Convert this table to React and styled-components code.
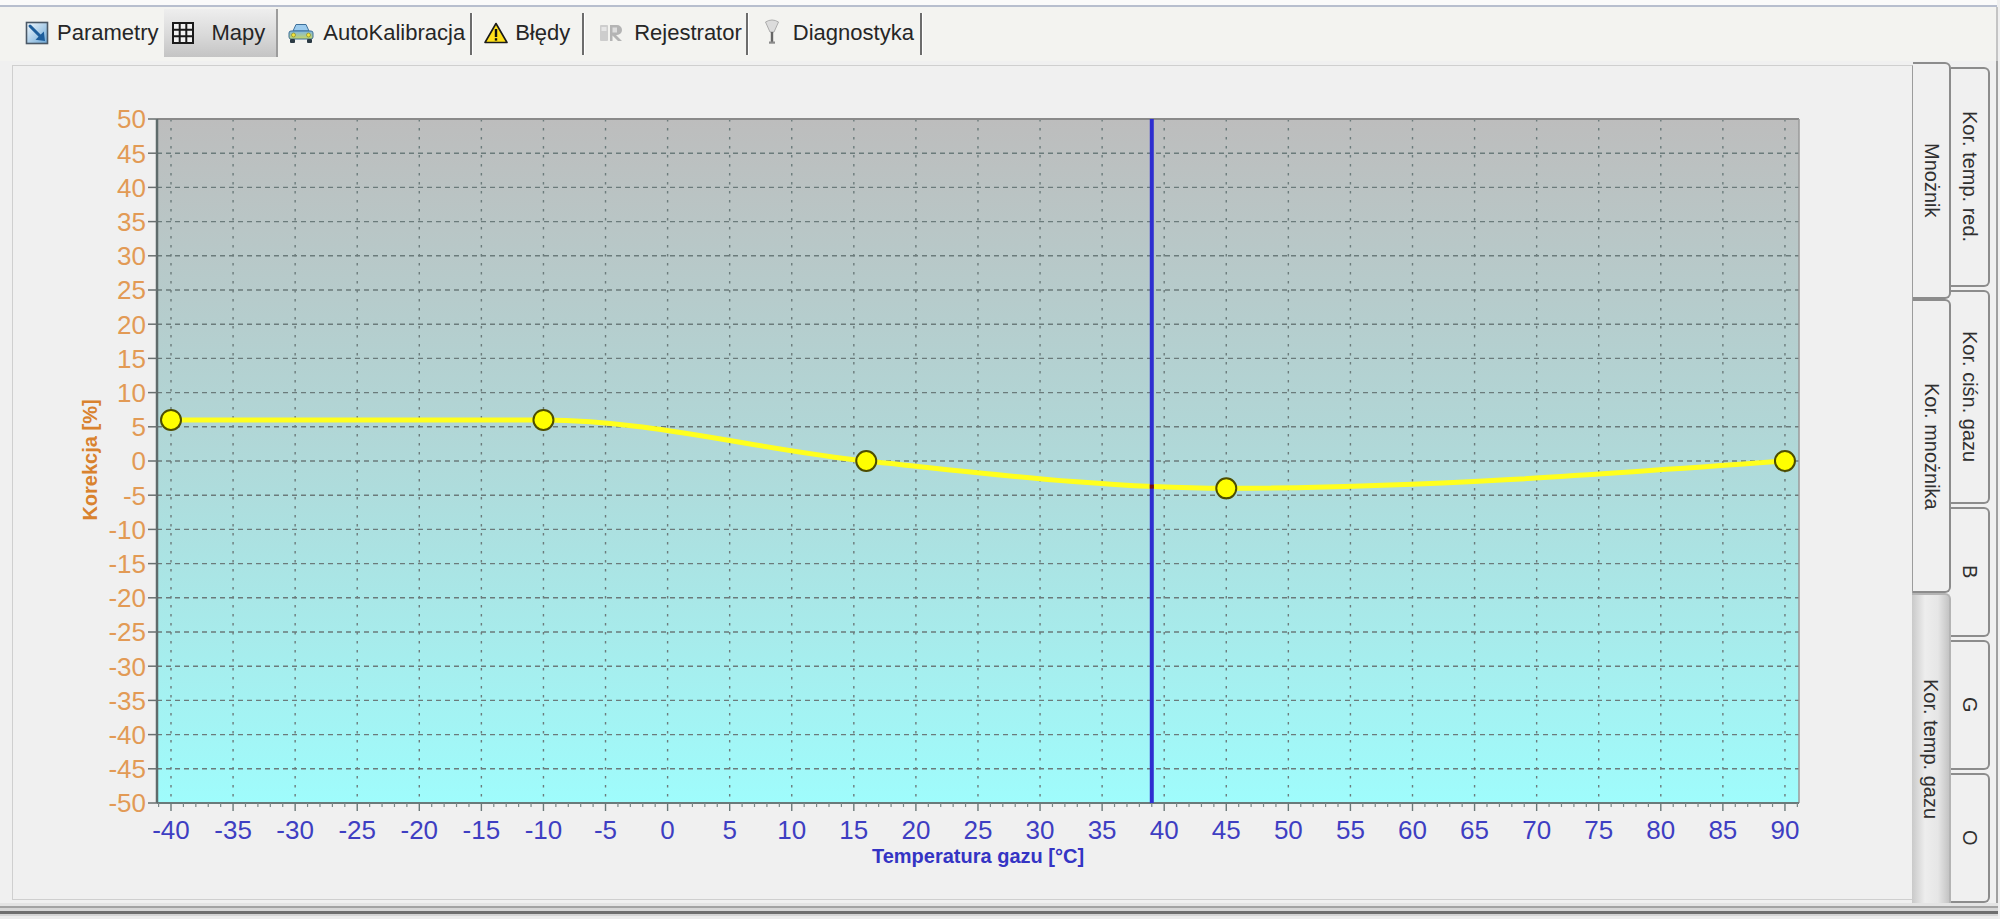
import React from "react";
import styled, { createGlobalStyle, css } from "styled-components";

const Global = createGlobalStyle`
  html, body { margin: 0; padding: 0; background: #f0f0f0; }
  body { font-family: "Liberation Sans", Arial, sans-serif; overflow: hidden; }
`;

const Window = styled.div`
  width: 2000px;
  height: 919px;
  display: flex;
  flex-direction: column;
  background: #f0f0f0;
  overflow: hidden;
`;

const TopStrip = styled.div`
  height: 5px;
  background: #fafafa;
  border-bottom: 2px solid #b7bece;
  margin-right: 3px;
  flex: none;
`;

const TabBar = styled.div`
  height: 54px;
  flex: none;
  display: flex;
  align-items: flex-start;
  padding-left: 17px;
  background: #f3f3f0;
  margin-right: 2px;
  border-right: 2px solid #c4c4c4;
  box-sizing: border-box;
`;

const Tab = styled.div`
  display: flex;
  align-items: center;
  height: 48px;
  margin-top: 2px;
  box-sizing: border-box;
  padding: 0 ${(p) => p.$pr}px 0 ${(p) => p.$pl}px;
  gap: ${(p) => p.$gap}px;
  font-size: 22px;
  color: #262626;
  white-space: nowrap;
  ${(p) =>
    p.$active &&
    css`
      background: linear-gradient(#eeeeee, #d9d9d9 55%, #c4c4c4);
      border-right: 2px solid #9c9c9c;
    `}
`;

const TabIcon = styled.span`
  display: flex;
  align-items: center;
  justify-content: center;
  width: ${(p) => p.$w}px;
  height: 30px;
  flex: none;
`;

const TabSep = styled.div`
  width: 2px;
  height: 42px;
  margin-top: 6px;
  background: #6c6c6c;
  box-shadow: 1px 0 0 #ffffff;
  flex: none;
`;

const BodyRow = styled.div`
  height: 842px;
  flex: none;
  display: flex;
  margin-right: 2px;
  padding-right: 6px;
  border-right: 2px solid #a0a0a0;
`;

const Panel = styled.div`
  flex: 1;
  margin: 4px 0 3px 12px;
  border: 1px solid #cfcfcf;
  border-right-color: #9c9c9c;
  background: #f0f0f0;
  overflow: hidden;
`;

const ChartSvg = styled.svg`
  display: block;
`;

const SideCol = styled.div`
  width: ${(p) => p.$w}px;
  flex: none;
  display: flex;
  flex-direction: column;
  padding-top: ${(p) => p.$pt}px;
  box-sizing: border-box;
`;

const SideTab = styled.div`
  box-sizing: border-box;
  height: ${(p) => (p.$h ? `${p.$h}px` : "auto")};
  flex: ${(p) => (p.$grow ? 1 : "none")};
  margin-bottom: ${(p) => p.$mb || 0}px;
  border: 2px solid #8c8c8c;
  border-left: none;
  border-radius: 0 6px 6px 0;
  background: #f0f0f0;
  display: flex;
  align-items: center;
  justify-content: center;
  ${(p) =>
    p.$active &&
    css`
      margin-left: -1px;
      border-color: #b4b4b4;
      border-bottom: none;
      border-radius: 0 6px 0 0;
      background: linear-gradient(90deg, #c9c9c9, #ededed 35%, #e6e6e6 70%, #c4c4c4);
    `}
`;

const SideLabel = styled.span`
  writing-mode: vertical-rl;
  font-size: 20px;
  color: #303030;
  white-space: nowrap;
`;

const BottomFrame = styled.div`
  height: 16px;
  flex: none;
  margin-right: 2px;
  background: linear-gradient(
    to bottom,
    #e4e4e4 0 3px,
    #a3a3a3 3px 5px,
    #d6d6d6 5px 8px,
    #6e6e6e 8px 11px,
    #d4d4d4 11px 13px,
    #ececec 13px
  );
`;

/* ---------- icons ---------- */
const IconParams = () => (
  <svg width="24" height="24" viewBox="0 0 24 24">
    <defs>
      <linearGradient id="pg" x1="0" y1="0" x2="1" y2="1">
        <stop offset="0" stopColor="#f4fafe" />
        <stop offset="1" stopColor="#6aa6d6" />
      </linearGradient>
    </defs>
    <rect x="1.5" y="1.5" width="21" height="21" fill="url(#pg)" stroke="#4a5866" strokeWidth="1.6" />
    <path d="M5 5 L15.5 15.5" stroke="#1d5d9b" strokeWidth="3" strokeLinecap="round" />
    <path d="M20 20 L10.5 18.8 L18.8 10.5 Z" fill="#1d5d9b" />
  </svg>
);

const IconMaps = () => (
  <svg width="24" height="24" viewBox="0 0 24 24">
    <rect x="2" y="2" width="20" height="20" fill="#f2f2f2" stroke="#1a1a1a" strokeWidth="2" />
    <path d="M8.7 2v20M15.3 2v20M2 8.7h20M2 15.3h20" stroke="#1a1a1a" strokeWidth="2" />
  </svg>
);

const IconCar = () => (
  <svg width="28" height="24" viewBox="0 0 28 24">
    <defs>
      <linearGradient id="cg" x1="0" y1="0" x2="0" y2="1">
        <stop offset="0" stopColor="#7eb6e4" />
        <stop offset="1" stopColor="#c8d660" />
      </linearGradient>
    </defs>
    <path d="M6 10 L9 3.5 H19 L22 10 Z" fill="#9ccbee" stroke="#3d6f99" strokeWidth="1" />
    <rect x="2" y="10" width="24" height="8" rx="2" fill="url(#cg)" stroke="#3d6f99" strokeWidth="1" />
    <circle cx="6.5" cy="14" r="2" fill="#f4e63a" stroke="#7a7a20" strokeWidth="0.6" />
    <circle cx="21.5" cy="14" r="2" fill="#f4e63a" stroke="#7a7a20" strokeWidth="0.6" />
    <rect x="3" y="18" width="5" height="4" rx="1" fill="#2b3a44" />
    <rect x="20" y="18" width="5" height="4" rx="1" fill="#2b3a44" />
  </svg>
);

const IconWarn = () => (
  <svg width="24" height="22" viewBox="0 0 24 22">
    <path d="M12 1.5 L23 20.5 H1 Z" fill="#ffe01a" stroke="#1a1a1a" strokeWidth="1.6" strokeLinejoin="round" />
    <rect x="10.8" y="7" width="2.4" height="8" fill="#111" />
    <rect x="10.8" y="16.2" width="2.4" height="2.4" fill="#111" />
  </svg>
);

const IconRec = () => (
  <svg width="28" height="24" viewBox="0 0 28 24">
    <rect x="3" y="4" width="8" height="16" rx="1" fill="#cdcdcd" />
    <rect x="4.5" y="6" width="5" height="4" fill="#e6e6e6" />
    <path d="M13 4 H20 A5 5 0 0 1 20 14 H19 L25 20 H21 L15.5 14.5 V20 H13 Z" fill="#b4b4b4" />
    <rect x="15.5" y="6.5" width="4.5" height="5" fill="#dedede" />
  </svg>
);

const IconDiag = () => (
  <svg width="18" height="28" viewBox="0 0 18 28">
    <path d="M2.5 3 Q9 -1 15.5 3 L11 13 H7 Z" fill="#dcdcdc" stroke="#acacac" strokeWidth="1" />
    <rect x="7.8" y="13" width="2.4" height="10" fill="#666" />
    <rect x="6" y="22.5" width="6" height="2.2" fill="#8a8a8a" />
  </svg>
);

/* ---------- chart ---------- */
const X0 = 171;
const XS = 12.415;
const Y0 = 119;
const YS = 6.84;
const xs = (v) => X0 + (v + 40) * XS;
const ys = (v) => Y0 + (50 - v) * YS;
const PL = 157;
const PR = 1799;
const PT = 119;
const PB = 803;

const DATA = [
  [-40, 6],
  [-10, 6],
  [16, 0],
  [45, -4],
  [90, 0],
];

function monotoneTangents(pts) {
  const n = pts.length;
  const sign = (v) => (v < 0 ? -1 : v > 0 ? 1 : 0);
  const t = new Array(n).fill(0);
  for (let i = 1; i < n - 1; i++) {
    const [x0, y0] = pts[i - 1];
    const [x1, y1] = pts[i];
    const [x2, y2] = pts[i + 1];
    const h0 = x1 - x0;
    const h1 = x2 - x1;
    const s0 = (y1 - y0) / h0;
    const s1 = (y2 - y1) / h1;
    const p = (s0 * h1 + s1 * h0) / (h0 + h1);
    t[i] = (sign(s0) + sign(s1)) * Math.min(Math.abs(s0), Math.abs(s1), 0.5 * Math.abs(p)) || 0;
  }
  const h = pts[1][0] - pts[0][0];
  t[0] = (3 * (pts[1][1] - pts[0][1]) / h - t[1]) / 2;
  const h2 = pts[n - 1][0] - pts[n - 2][0];
  t[n - 1] = (3 * (pts[n - 1][1] - pts[n - 2][1]) / h2 - t[n - 2]) / 2;
  return t;
}

function monotonePath(pts, t) {
  let d = `M${pts[0][0]},${pts[0][1]}`;
  for (let i = 0; i < pts.length - 1; i++) {
    const [x0, y0] = pts[i];
    const [x1, y1] = pts[i + 1];
    const dx = (x1 - x0) / 3;
    d += ` C${x0 + dx},${y0 + dx * t[i]} ${x1 - dx},${y1 - dx * t[i + 1]} ${x1},${y1}`;
  }
  return d;
}

function evalAt(pts, t, x) {
  for (let i = 0; i < pts.length - 1; i++) {
    const [x0, y0] = pts[i];
    const [x1, y1] = pts[i + 1];
    if (x >= x0 && x <= x1) {
      const h = x1 - x0;
      const u = (x - x0) / h;
      const h00 = 2 * u ** 3 - 3 * u ** 2 + 1;
      const h10 = u ** 3 - 2 * u ** 2 + u;
      const h01 = 1 - h00;
      const h11 = u ** 3 - u ** 2;
      return h00 * y0 + h10 * h * t[i] + h01 * y1 + h11 * h * t[i + 1];
    }
  }
  return pts[0][1];
}

function Chart() {
  const xMaj = [];
  for (let v = -40; v <= 90; v += 5) xMaj.push(v);
  const yMaj = [];
  for (let v = 50; v >= -50; v -= 5) yMaj.push(v);
  const minor = [];
  for (let v = -41; v <= 91; v++) if (v % 5 !== 0) minor.push(v);
  const pts = DATA.map(([x, y]) => [xs(x), ys(y)]);
  const tan = monotoneTangents(pts);
  const curve = monotonePath(pts, tan);
  const cx = xs(39);
  const cy = evalAt(pts, tan, cx);

  return (
    <ChartSvg width="1899" height="833" viewBox="13 66 1899 833">
      <defs>
        <linearGradient id="plotbg" x1="0" y1="0" x2="0" y2="1">
          <stop offset="0" stopColor="#bdbdbd" />
          <stop offset="0.45" stopColor="#b1d6d6" />
          <stop offset="1" stopColor="#9ffcfc" />
        </linearGradient>
      </defs>
      <rect x={PL} y={PT} width={PR - PL} height={PB - PT} fill="url(#plotbg)" />

      {yMaj.slice(1, -1).map((v) => (
        <line key={`h${v}`} x1={PL} x2={PR} y1={ys(v)} y2={ys(v)} stroke="#6b7b7b" strokeWidth="1.4" strokeDasharray="5 4" />
      ))}
      {xMaj.map((v) => (
        <line key={`v${v}`} x1={xs(v)} x2={xs(v)} y1={PT} y2={PB} stroke="#6b7b7b" strokeWidth="1.4" strokeDasharray="2.5 6.5" />
      ))}

      {/* frame */}
      <line x1={PL} x2={PR} y1={PT} y2={PT} stroke="#8a8a8a" strokeWidth="2" />
      <line x1={PR} x2={PR} y1={PT} y2={PB} stroke="#9a9a9a" strokeWidth="1.5" />
      <line x1={PL} x2={PR} y1={PB} y2={PB} stroke="#6a7a7a" strokeWidth="2" />
      <line x1={PL} x2={PL} y1={PT} y2={PB} stroke="#5f6b6b" strokeWidth="2.5" />

      {/* ticks */}
      {yMaj.map((v) => (
        <line key={`yt${v}`} x1={148} x2={PL} y1={ys(v)} y2={ys(v)} stroke="#6a7070" strokeWidth="1.5" />
      ))}
      {minor.map((v) => (
        <line key={`mt${v}`} x1={xs(v)} x2={xs(v)} y1={PB} y2={PB + 4} stroke="#7a8888" strokeWidth="1.2" />
      ))}
      {xMaj.map((v) => (
        <line key={`xt${v}`} x1={xs(v)} x2={xs(v)} y1={PB} y2={PB + 8} stroke="#6a7878" strokeWidth="1.4" />
      ))}

      {/* labels */}
      {yMaj.map((v) => (
        <text key={`yl${v}`} x={146} y={ys(v) + 9.3} textAnchor="end" fontSize="26" fill="#e29a55" fontFamily="Liberation Sans, Arial, sans-serif">
          {v}
        </text>
      ))}
      {xMaj.map((v) => (
        <text key={`xl${v}`} x={xs(v)} y={838.5} textAnchor="middle" fontSize="26" fill="#3e3ec2" fontFamily="Liberation Sans, Arial, sans-serif">
          {v}
        </text>
      ))}
      <text x={978} y={863} textAnchor="middle" fontSize="20" fontWeight="bold" fill="#3434c4" fontFamily="Liberation Sans, Arial, sans-serif">
        Temperatura gazu [°C]
      </text>
      <text
        x={97}
        y={460}
        transform="rotate(-90 97 460)"
        textAnchor="middle"
        fontSize="20"
        fontWeight="bold"
        fill="#d9822e"
        fontFamily="Liberation Sans, Arial, sans-serif"
      >
        Korekcja [%]
      </text>

      {/* data */}
      <path d={curve} fill="none" stroke="#ffff1e" strokeWidth="5" strokeLinecap="round" />
      <line x1={cx} x2={cx} y1={PT} y2={PB} stroke="#2e2ed0" strokeWidth="4" />
      <rect x={cx - 2} y={cy - 2} width="4" height="4" fill="#7a1010" />
      {pts.map(([x, y], i) => (
        <circle key={i} cx={x} cy={y} r="10" fill="#ffff00" stroke="#4d4d00" strokeWidth="2" />
      ))}
    </ChartSvg>
  );
}

const TABS = [
  { label: "Parametry", icon: <IconParams />, w: 24, pl: 8, pr: 6, gap: 8 },
  { label: "Mapy", icon: <IconMaps />, w: 24, pl: 7, pr: 11, gap: 16, active: true },
  { label: "AutoKalibracja", icon: <IconCar />, w: 28, pl: 9, pr: 5, gap: 8, sep: true },
  { label: "Błędy", icon: <IconWarn />, w: 24, pl: 12, pr: 12, gap: 7, sep: true },
  { label: "Rejestrator", icon: <IconRec />, w: 28, pl: 13, pr: 4, gap: 9, sep: true },
  { label: "Diagnostyka", icon: <IconDiag />, w: 18, pl: 15, pr: 6, gap: 12, sep: true },
];

export default function App() {
  return (
    <>
      <Global />
      <Window>
        <TopStrip />
        <TabBar>
          {TABS.map((t) => (
            <React.Fragment key={t.label}>
              <Tab $pl={t.pl} $pr={t.pr} $gap={t.gap} $active={t.active}>
                <TabIcon $w={t.w}>{t.icon}</TabIcon>
                <span>{t.label}</span>
              </Tab>
              {t.sep && <TabSep />}
            </React.Fragment>
          ))}
        </TabBar>
        <BodyRow>
          <Panel>
            <Chart />
          </Panel>
          <SideCol $w={38} $pt={1}>
            <SideTab $h={237}>
              <SideLabel>Mnożnik</SideLabel>
            </SideTab>
            <SideTab $h={294}>
              <SideLabel>Kor. mnożnika</SideLabel>
            </SideTab>
            <SideTab $grow $active>
              <SideLabel>Kor. temp. gazu</SideLabel>
            </SideTab>
          </SideCol>
          <SideCol $w={39} $pt={6}>
            <SideTab $h={220} $mb={3}>
              <SideLabel>Kor. temp. red.</SideLabel>
            </SideTab>
            <SideTab $h={214} $mb={3}>
              <SideLabel>Kor. ciśn. gazu</SideLabel>
            </SideTab>
            <SideTab $h={130} $mb={3}>
              <SideLabel>B</SideLabel>
            </SideTab>
            <SideTab $h={130} $mb={3}>
              <SideLabel>G</SideLabel>
            </SideTab>
            <SideTab $h={130}>
              <SideLabel>O</SideLabel>
            </SideTab>
          </SideCol>
        </BodyRow>
        <BottomFrame />
      </Window>
    </>
  );
}
